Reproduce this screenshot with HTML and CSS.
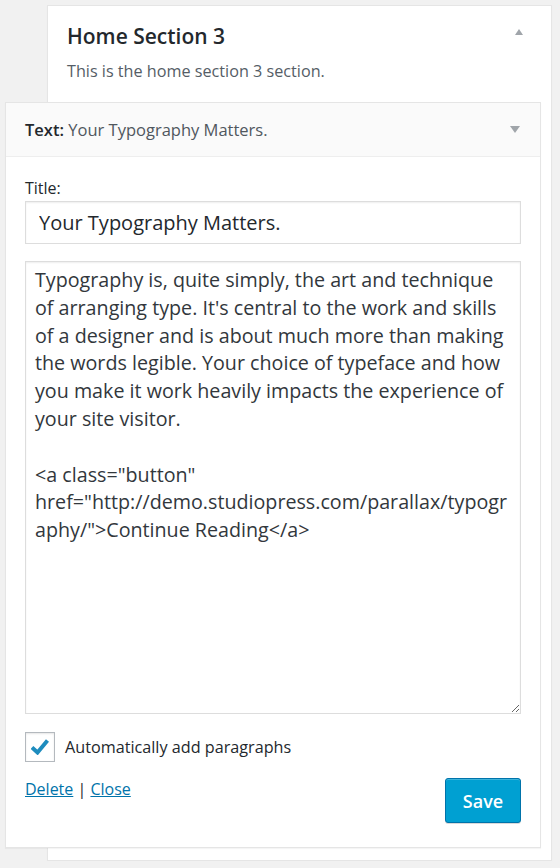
FILE: index.html
```html
<!DOCTYPE html>
<html>
    <head>
        <meta charset="UTF-8">
        <title>Home Section 3</title>
        <link rel="stylesheet" href="styles.css">
    </head>
    <body>
        <div class="section">
            <div class="section-head">
                <div class="section-info">
                    <h3 class="section-title">Home Section 3</h3>
                    <p class="section-desc">This is the home section 3 section.</p>
                </div>
                <span class="arrow-up"></span>
            </div>
            <div class="widget">
                <div class="widget-top">
                    <h4 class="widget-title">Text:<span class="in-title"> Your Typography Matters.</span></h4>
                    <span class="arrow-down"></span>
                </div>
                <form class="widget-inside">
                    <p class="field">
                        <label for="title">Title:</label>
                        <input class="in" type="text" id="title" value="Your Typography Matters.">
                    </p>
                    <textarea class="content" id="text">Typography is, quite simply, the art and technique of arranging type. It's central to the work and skills of a designer and is about much more than making the words legible. Your choice of typeface and how you make it work heavily impacts the experience of your site visitor.

&lt;a class="button" href="http://demo.studiopress.com/parallax/typography/"&gt;Continue Reading&lt;/a&gt;</textarea>
                    <label class="check-row">
                        <span class="box">
                            <svg width="18" height="16" viewBox="0 0 18 16"><path d="M1 8.5 L6.5 13.5 L16.5 1.5" fill="none" stroke="#1e8cbe" stroke-width="4"/></svg>
                        </span>
                        Automatically add paragraphs
                    </label>
                    <div class="actions">
                        <div class="links"><a href="#">Delete</a> | <a href="#">Close</a></div>
                        <input type="button" class="save" value="Save">
                    </div>
                </form>
            </div>
        </div>
    </body>
</html>
```

FILE: styles.css
```css
body {
    margin: 0;
    background: #f1f1f1;
    font-family: "Open Sans", "Noto Sans", sans-serif;
    color: #23282d;
}
.section {
    margin: 5px 8px 0 47px;
    padding-bottom: 12px;
    background: white;
    border: 1px solid #e5e5e5;
    box-shadow: 0 1px 1px rgba(0, 0, 0, 0.04);
}
.section-head {
    display: flex;
    align-items: flex-start;
    padding: 16px 28px 20px 19px;
}
.section-info {
    flex: 1;
}
.section-title {
    margin: 0;
    font-size: 21px;
    line-height: 28px;
    font-weight: 600;
    color: #23282d;
}
.section-desc {
    margin: 10px 0 0;
    font-size: 16.2px;
    line-height: 22px;
    color: #555d66;
}
.arrow-up {
    margin-top: 7px;
    width: 0;
    height: 0;
    border-left: 4.5px solid transparent;
    border-right: 4.5px solid transparent;
    border-bottom: 6px solid #a0a5aa;
}
.widget {
    margin: 0 10px 0 -43px;
    background: white;
    border: 1px solid #e5e5e5;
    box-shadow: 0 1px 1px rgba(0, 0, 0, 0.04);
}
.widget-top {
    display: flex;
    align-items: center;
    height: 53px;
    padding: 0 20px 0 19px;
    background: #fafafa;
    border-bottom: 1px solid #eee;
}
.widget-title {
    flex: 1;
    margin: 0;
    font-size: 16.5px;
    font-weight: 600;
    color: #23282d;
}
.in-title {
    font-weight: normal;
    color: #50575e;
}
.arrow-down {
    width: 0;
    height: 0;
    border-left: 5px solid transparent;
    border-right: 5px solid transparent;
    border-top: 7px solid #a0a5aa;
}
.widget-inside {
    padding: 21px 19px 24px;
}
.field {
    margin: 0 0 17px;
}
.field label {
    display: block;
    margin-bottom: 3px;
    font-size: 16px;
    line-height: 20px;
}
.in {
    display: block;
    box-sizing: border-box;
    width: 100%;
    height: 43px;
    margin: 0;
    padding: 0 13px;
    font-family: inherit;
    font-size: 20px;
    color: #23282d;
    border: 1px solid #ddd;
    box-shadow: inset 0 1px 2px rgba(0, 0, 0, 0.07);
    outline: none;
}
.content {
    display: block;
    box-sizing: border-box;
    width: 100%;
    height: 453px;
    margin: 0;
    padding: 4px 9px;
    font-family: inherit;
    font-size: 19.7px;
    line-height: 27.8px;
    color: #32373c;
    border: 1px solid #ddd;
    box-shadow: inset 0 1px 2px rgba(0, 0, 0, 0.07);
    resize: vertical;
    outline: none;
}
.check-row {
    display: flex;
    align-items: center;
    gap: 10px;
    margin-top: 18px;
    font-size: 16.2px;
    line-height: 22px;
}
.box {
    display: flex;
    align-items: center;
    justify-content: center;
    box-sizing: border-box;
    width: 30px;
    height: 30px;
    border: 1px solid #b4b9be;
    box-shadow: inset 0 1px 2px rgba(0, 0, 0, 0.1);
}
.actions {
    display: flex;
    justify-content: space-between;
    align-items: flex-start;
    margin-top: 16px;
}
.links {
    font-size: 16px;
    line-height: 22px;
    color: #23282d;
}
.links a {
    color: #0073aa;
}
.save {
    box-sizing: border-box;
    width: 76px;
    height: 45px;
    margin: 0;
    padding: 0;
    font-family: inherit;
    font-size: 18px;
    font-weight: 600;
    color: white;
    background: #00a0d2;
    border: 1px solid #0073aa;
    border-radius: 3px;
    box-shadow: inset 0 1px 0 rgba(120, 200, 230, 0.5), 0 1px 0 rgba(0, 0, 0, 0.15);
    cursor: pointer;
}
```
